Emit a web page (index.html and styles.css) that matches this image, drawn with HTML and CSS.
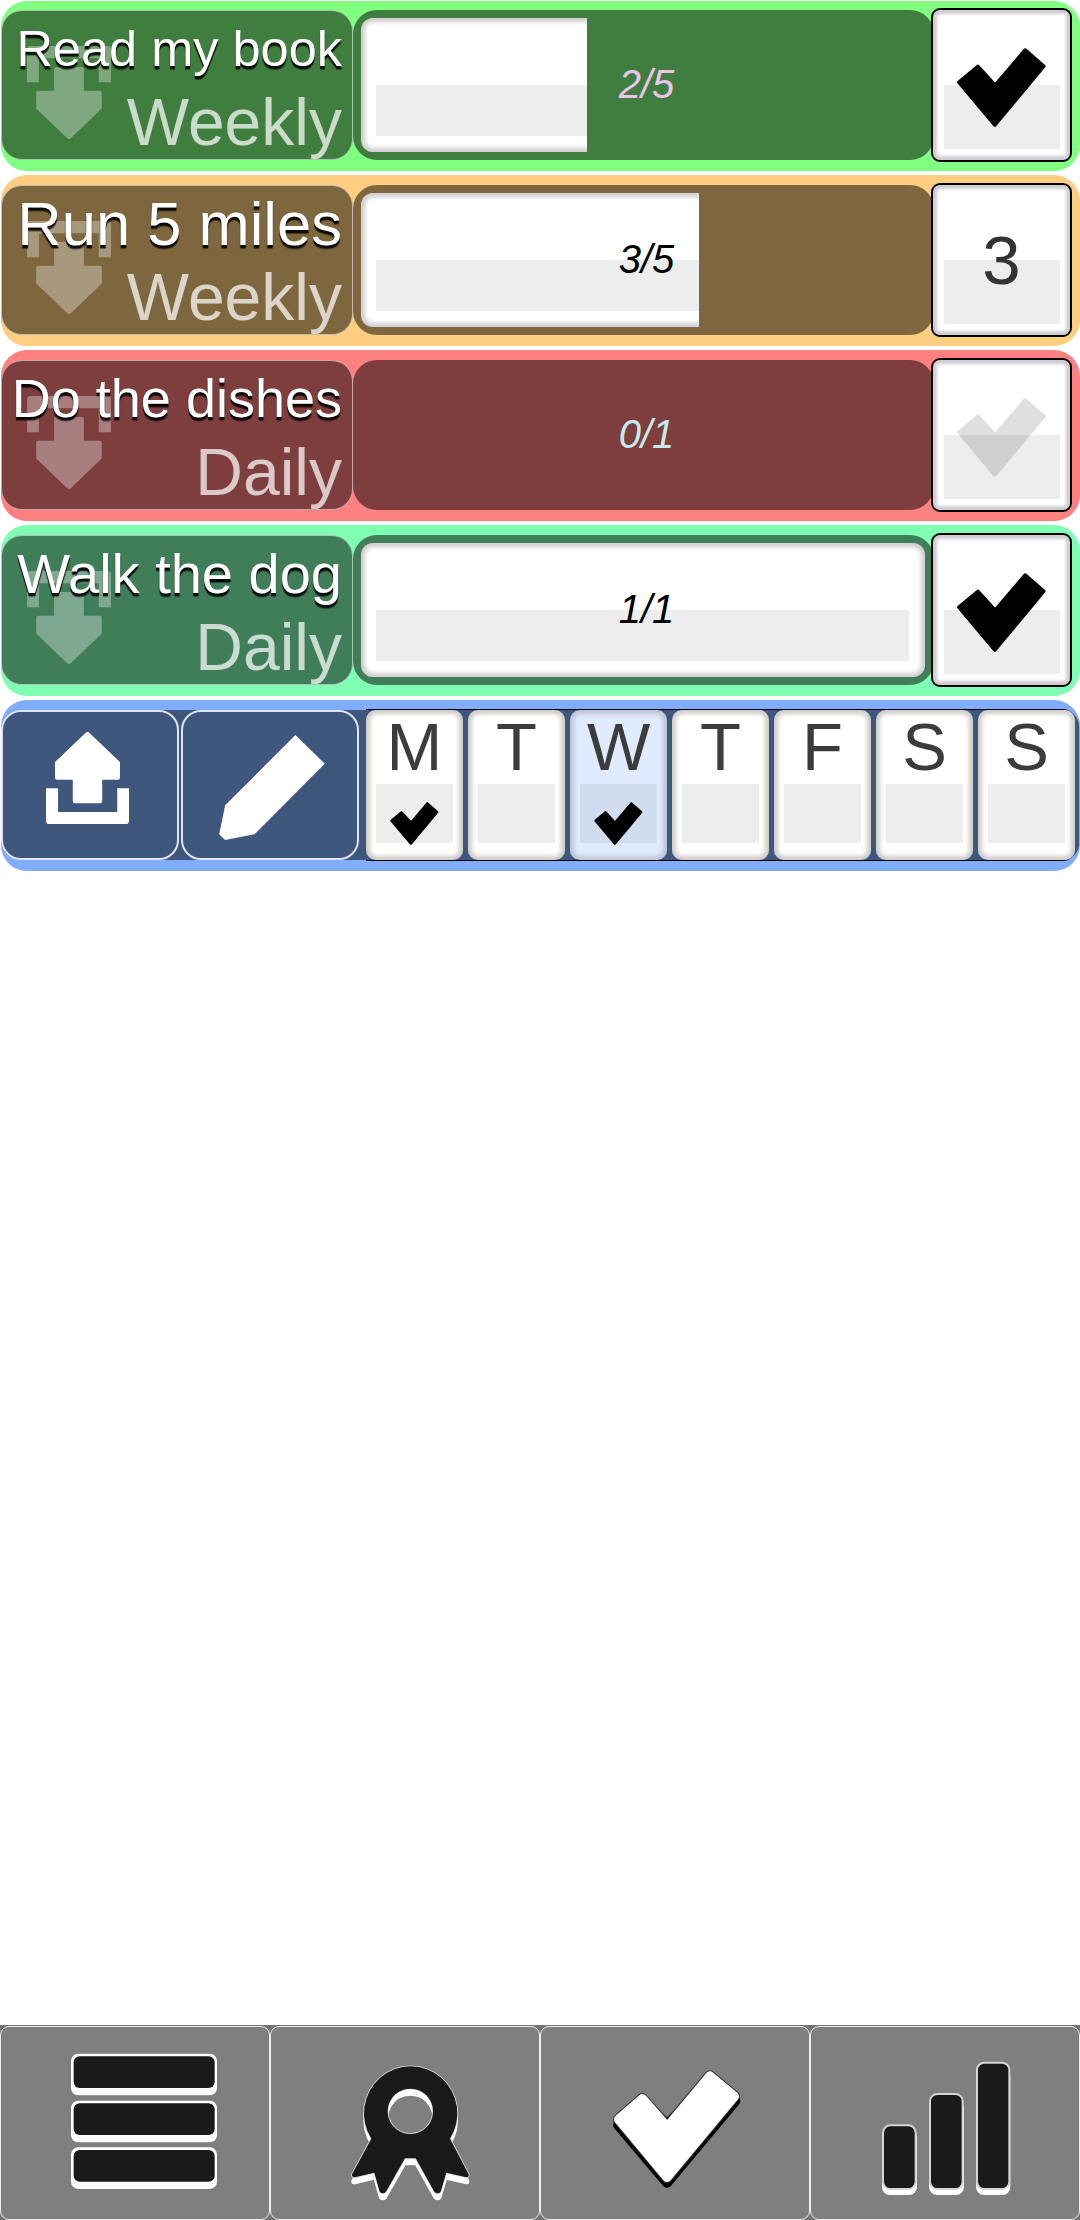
FILE: index.html
```html
<!DOCTYPE html>
<html lang="en">
<head>
<meta charset="utf-8">
<title>Habits</title>
<link rel="stylesheet" href="styles.css">
</head>
<body>
<svg class="defs" aria-hidden="true">
  <symbol id="share" viewBox="139 125 248 275">
    <path d="M139 293h36v71h177v-71h35v97q0 10-10 10H149q-10 0-10-10z"/>
    <path d="M257 128q6-6 12 0l91 87v47q0 6-6 6h-47v64q0 6-6 6h-76q-6 0-6-6v-64h-47q-6 0-6-6v-47z"/>
  </symbol>
  <symbol id="check" viewBox="713 143 266 237">
    <path d="M775 199L827 256L917 150L972 198L826 373L719 246Z" stroke="currentColor" stroke-width="12" stroke-linejoin="round"/>
  </symbol>
</svg>
<main class="list">
  <section class="row green">
    <div class="label"><svg class="drop"><use href="#share"/></svg><span class="name n1">Read my book</span><span class="freq">Weekly</span></div>
    <div class="bar"><div class="fill" style="width:40%"><div class="gloss"></div></div><span class="count">2/5</span></div>
    <div class="box"><svg class="tick"><use href="#check"/></svg></div>
  </section>
  <section class="row orange">
    <div class="label"><svg class="drop"><use href="#share"/></svg><span class="name n2">Run 5 miles</span><span class="freq">Weekly</span></div>
    <div class="bar"><div class="fill" style="width:60%"><div class="gloss"></div></div><span class="count">3/5</span></div>
    <div class="box">3</div>
  </section>
  <section class="row red">
    <div class="label"><svg class="drop"><use href="#share"/></svg><span class="name n3">Do the dishes</span><span class="freq">Daily</span></div>
    <div class="bar"><div class="fill" style="width:0%"></div><span class="count">0/1</span></div>
    <div class="box"><svg class="tick faint"><use href="#check"/></svg></div>
  </section>
  <section class="row mint">
    <div class="label"><svg class="drop"><use href="#share"/></svg><span class="name n4">Walk the dog</span><span class="freq">Daily</span></div>
    <div class="bar"><div class="fill" style="width:100%"><div class="gloss"></div></div><span class="count">1/1</span></div>
    <div class="box"><svg class="tick"><use href="#check"/></svg></div>
  </section>
  <section class="row blue">
    <div class="panel">
      <div class="action"><svg class="up"><use href="#share"/></svg></div>
      <div class="action"><svg class="pencil" viewBox="657 135 316 314"><path d="M885 135L973 221L763 432L675 449L657 432L675 345Z"/></svg></div>
      <div class="days">
        <div class="day"><span>M</span><svg class="tick"><use href="#check"/></svg></div>
        <div class="day"><span>T</span></div>
        <div class="day today"><span>W</span><svg class="tick"><use href="#check"/></svg></div>
        <div class="day"><span>T</span></div>
        <div class="day"><span>F</span></div>
        <div class="day"><span>S</span></div>
        <div class="day"><span>S</span></div>
      </div>
    </div>
  </section>
</main>
<nav class="tabs">
  <div class="tab"><svg viewBox="3 51 804 576">
    <g fill="#fff"><rect x="213" y="131" width="438" height="125" rx="22"/><rect x="213" y="272" width="438" height="125" rx="22"/><rect x="213" y="412" width="438" height="125" rx="22"/></g>
    <g fill="#1a1a1a"><rect x="221" y="139" width="423" height="95" rx="18"/><rect x="221" y="280" width="423" height="95" rx="18"/><rect x="221" y="420" width="423" height="95" rx="18"/></g>
  </svg></div>
  <div class="tab"><svg viewBox="18 51 804 576">
    <defs><path id="ribbon" fill-rule="evenodd" d="M319 386A140 141 0 1 1 555 386L611 493Q613 502 604 502L544 488L527 545Q518 555 508 545L452 445H420L363 545Q354 555 344 545L328 488L270 502Q259 502 261 493ZM436 236a68 68 0 1 0 .1 0Z"/></defs>
    <use href="#ribbon" y="19" fill="#fff" stroke="#fff" stroke-width="4"/>
    <use href="#ribbon" fill="#1a1a1a" stroke="#ddd" stroke-width="5"/>
    <use href="#ribbon" fill="#1a1a1a"/>
  </svg></div>
  <div class="tab"><svg viewBox="18 51 804 576" stroke-linejoin="round">
    <path d="M325 278L397 343L525 210L601 273L396 518L249 345Z" fill="#000" stroke="#000" stroke-width="30"/>
    <path d="M322 266L397 350L525 198L598 259L396 502L251 328Z" fill="#333" stroke="#333" stroke-width="34"/>
    <path d="M322 266L397 351L525 198L598 259L396 502L251 328Z" fill="#fff" stroke="#fff" stroke-width="28"/>
  </svg></div>
  <div class="tab"><svg viewBox="33 51 804 576">
    <g fill="#fff"><rect x="246" y="360" width="105" height="195" rx="24"/><rect x="387" y="270" width="105" height="285" rx="24"/><rect x="528" y="180" width="103" height="375" rx="24"/></g>
    <g fill="#1a1a1a" stroke="#d4d4d4" stroke-width="6"><rect x="249" y="346" width="98" height="191" rx="22"/><rect x="390" y="252" width="98" height="285" rx="22"/><rect x="531" y="158" width="97" height="379" rx="22"/></g>
  </svg></div>
</nav>
</body>
</html>
```
FILE: styles.css
```css
* { box-sizing: border-box; }
body {
  margin: 0;
  width: 1080px;
  height: 2220px;
  background: #fff;
  font-family: "Liberation Sans", Arial, sans-serif;
  display: flex;
  flex-direction: column;
  justify-content: space-between;
}
svg { display: block; fill: currentColor; }
.defs { position: absolute; width: 0; height: 0; }

.list {
  display: flex;
  flex-direction: column;
  gap: 4px;
  padding: 1px 0 0 1px;
}
.row {
  width: 1079px;
  height: 171px;
  padding-top: 10px;
  border-radius: 26px;
  background: var(--light);
  display: flex;
  align-items: flex-start;
}
.row:first-child { height: 170px; padding-top: 9px; }
.green { --light: #80ff80; --dark: #407e3f; --count: #ecc4ec; }
.orange { --light: #ffce80; --dark: #7e673e; --count: #000; }
.red { --light: #ff8080; --dark: #7f3e3e; --count: #c4ecec; }
.mint { --light: #80ffb4; --dark: #407e59; --count: #000; }
.blue { --light: #80adff; --dark: #3f567d; }

.label {
  position: relative;
  width: 352px;
  height: 150px;
  padding: 1px 10px 0 0;
  border: 1px solid rgba(255, 255, 255, .55);
  border-radius: 21px;
  background: var(--dark);
  color: #fff;
  text-align: right;
  white-space: nowrap;
  display: flex;
  flex-direction: column;
}
.drop {
  position: absolute;
  left: 25px;
  top: 35px;
  width: 84px;
  height: 93px;
  transform: rotate(180deg);
  opacity: .33;
}
.name {
  position: relative;
  height: 73px;
  line-height: 73px;
  text-shadow: 0 3px 1px rgba(0, 0, 0, .85), 0 4px 1px rgba(0, 0, 0, .4);
}
.n1 { font-size: 50.5px; }
.n2 { font-size: 61.5px; }
.n3 { font-size: 54px; }
.n4 { font-size: 56px; }
.freq {
  position: relative;
  height: 74px;
  line-height: 74px;
  font-size: 66px;
  color: rgba(255, 255, 255, .72);
}

.bar {
  position: relative;
  width: 581px;
  height: 150px;
  padding: 8px 9px 8px 8px;
  border-radius: 24px;
  background: var(--dark);
}
.fill { height: 134px; overflow: hidden; }
.gloss {
  width: 564px;
  height: 134px;
  border-radius: 12px;
  background: linear-gradient(#ededed, #ededed) 15px 67px / 533px 51px no-repeat #fff;
  box-shadow: inset 0 0 4px 4px #cfcdcf;
}
.count {
  position: absolute;
  inset: -1px 0 0 6px;
  line-height: 150px;
  text-align: center;
  font-size: 40px;
  font-style: italic;
  color: var(--count);
}

.box {
  position: relative;
  width: 141px;
  height: 154px;
  margin: -2px 0 0 -3px;
  border: 2px solid #000;
  border-radius: 9px;
  background: linear-gradient(#ededed, #ededed) 11px 75px / 116px 64px no-repeat #fff;
  box-shadow: inset 0 0 3px 4px #cfcdd2;
  color: #333;
  font-size: 69px;
  display: flex;
  align-items: center;
  justify-content: center;
}
.box .tick { width: 89px; height: 79px; margin-top: 5px; color: #000; }
.box .faint { opacity: .12; }

.panel {
  width: 1078px;
  height: 150px;
  border-radius: 20px 16px 16px 20px;
  background: var(--dark);
  display: flex;
}
.action {
  width: 178px;
  height: 150px;
  margin-right: 2px;
  border: 2px solid #dfe4ee;
  border-radius: 20px;
  color: #fff;
}
.action + .action { margin-right: 7px; }
.up { width: 83px; height: 92px; margin: 20px 0 0 43px; }
.pencil { width: 106px; height: 105px; margin: 23px 0 0 36px; }
.days {
  height: 152px;
  margin-top: -1px;
  border: solid #000;
  border-width: 1px 0;
  border-radius: 0 12px 12px 0;
  display: flex;
  gap: 5px;
}
.day {
  width: 97px;
  height: 150px;
  border-radius: 10px;
  background: linear-gradient(#ededed, #ededed) 10px 74px / 77px 59px no-repeat #fff;
  box-shadow: inset 0 0 4px 4px #cfccc6;
  color: #3c3c3c;
  font-size: 67px;
  line-height: 74px;
  display: flex;
  flex-direction: column;
  align-items: center;
}
.today {
  background: linear-gradient(#d2dcef, #d2dcef) 10px 74px / 77px 59px no-repeat #e1ebff;
  box-shadow: inset 0 0 4px 4px #bec5d3;
}
.day .tick { width: 49px; height: 43px; margin-top: 18px; color: #000; }

.tabs {
  height: 195px;
  padding-top: 1px;
  background: #747474;
  display: flex;
}
.tab {
  width: 270px;
  height: 194px;
  border: 1px solid #eee;
  border-radius: 9px;
  background: #7f7f7f;
}
.tab svg { width: 268px; height: 192px; }
```
